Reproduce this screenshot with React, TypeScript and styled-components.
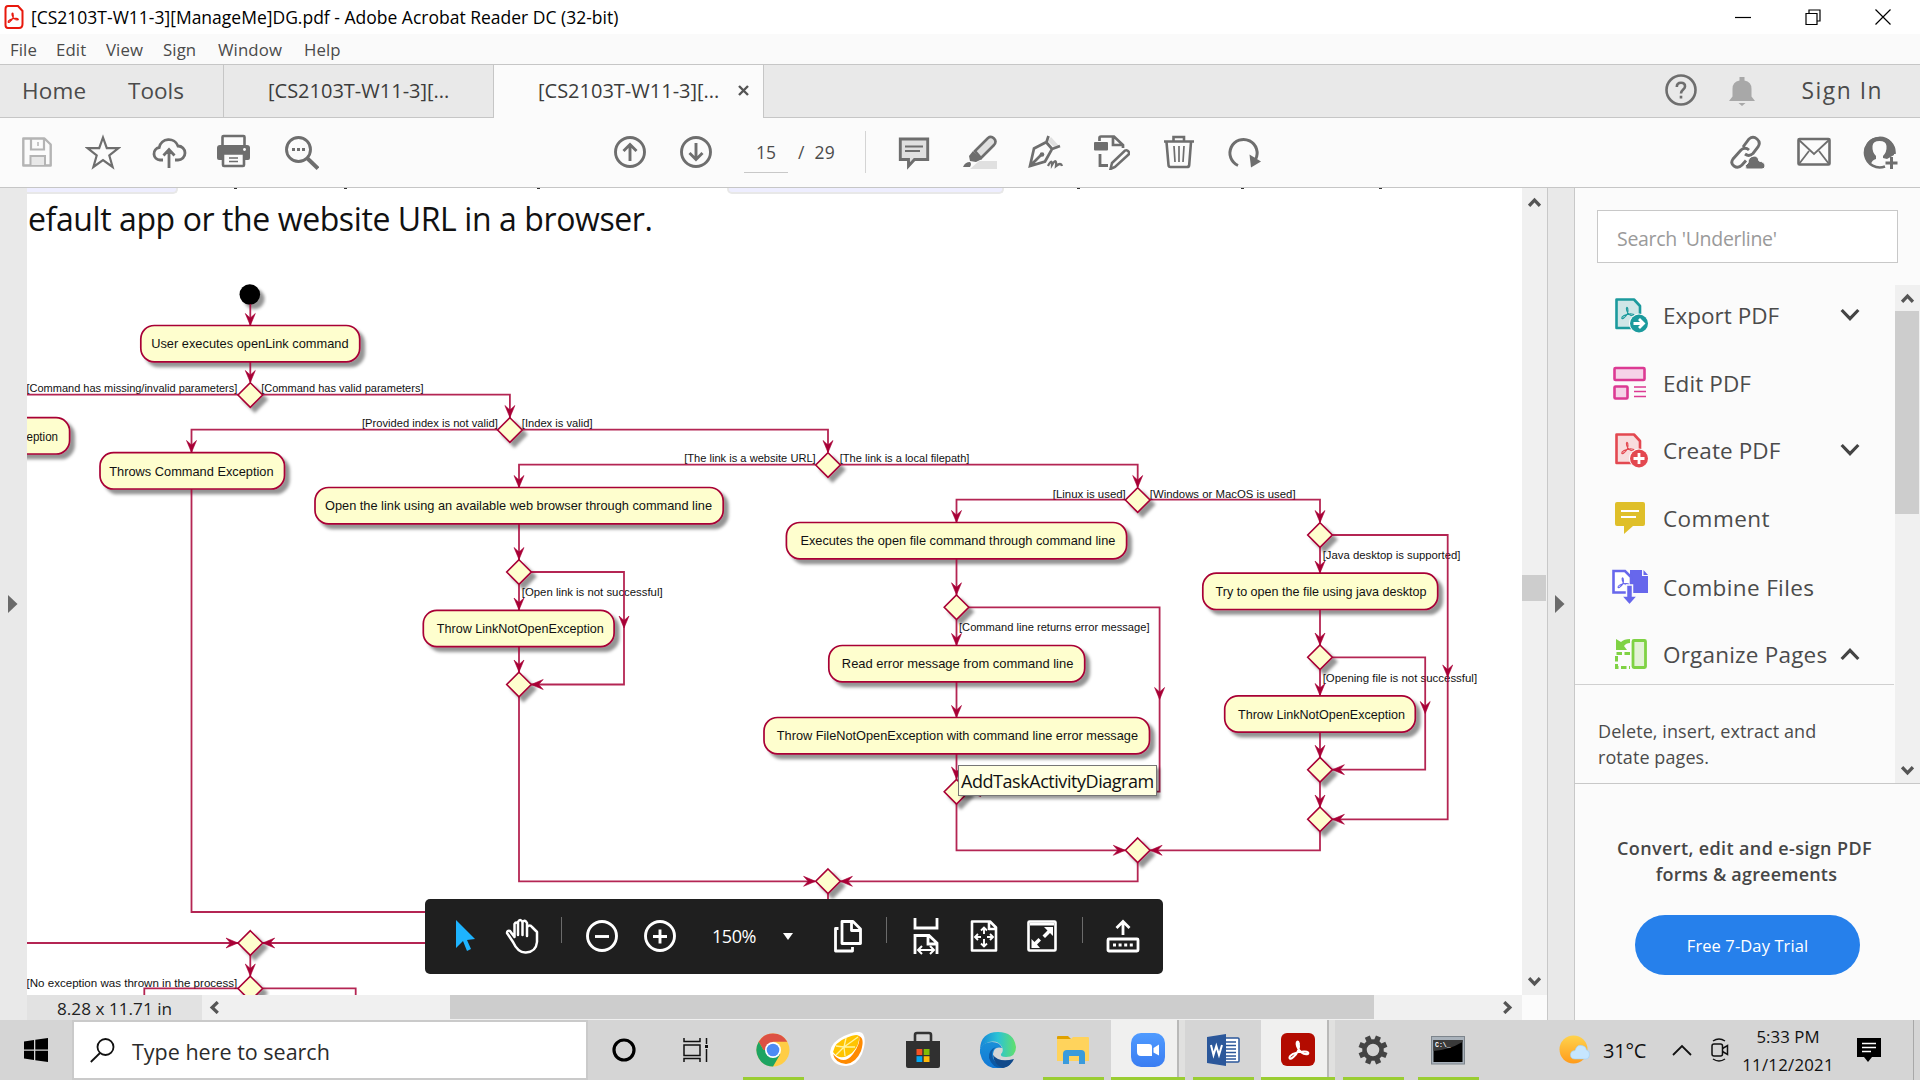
import React from "react";
import styled, { createGlobalStyle } from "styled-components";

const Global = createGlobalStyle`
  html, body { margin: 0; padding: 0; background: #fff; overflow: hidden; }
  * { box-sizing: border-box; }
  svg { display: block; flex: none; }
`;
const UI = `"Segoe UI", "Open Sans", "Noto Sans", sans-serif`;
const G = "#6e6e6e";

const Window = styled.div`
  width: 1920px; height: 1080px; display: flex; flex-direction: column;
  font-family: ${UI}; color: #4b4b4b; overflow: hidden; background: #fbfbfb;
`;
const Txt = styled.span<{ $s: number; $ls?: number; $c?: string; $b?: number }>`
  font-size: ${p => p.$s}px; letter-spacing: ${p => p.$ls || 0}px;
  color: ${p => p.$c || "inherit"}; font-weight: ${p => p.$b || 400}; white-space: nowrap;
`;
const TitleBar = styled.header`
  height: 34px; flex: none; background: #fff; display: flex; align-items: center; padding-left: 4px; color: #000;
`;
const TitleText = styled.div`margin-left: 7px; flex: 1; line-height: 34px;`;
const WinButtons = styled.div`display: flex; margin-right: 2px;`;
const WinButton = styled.div`width: 70px; height: 34px; display: flex; align-items: center; justify-content: center;`;
const MenuBar = styled.nav`
  height: 30px; flex: none; background: #fafafa; display: flex; align-items: center; padding-left: 10px; color: #4a4a4a;
`;
const MenuItem = styled.div<{ $w: number }>`width: ${p => p.$w}px; line-height: 30px; padding-top: 1px;`;
const TabBar = styled.div`
  height: 54px; flex: none; display: flex; background: #e9e9e9; border-top: 1px solid #c6c6c6;
`;
const TabCell = styled.div<{ $w?: number; $pl: number; $on?: boolean; $edge?: boolean }>`
  ${p => (p.$w ? `width: ${p.$w}px; flex: none;` : "flex: 1;")}
  padding-left: ${p => p.$pl}px; display: flex; align-items: center; padding-bottom: ${p => (p.$on ? 2 : 1)}px;
  background: ${p => (p.$on ? "#fbfbfb" : "transparent")};
  border-bottom: ${p => (p.$on ? "0" : "1px solid #c6c6c6")};
  border-left: ${p => (p.$edge ? "1px solid #c6c6c6" : "0")};
`;
const TabClose = styled.div`margin-left: auto; margin-right: 14px;`;
const Account = styled.div`
  margin-left: auto; display: flex; align-items: center; padding-right: 37px;
  & > svg:first-child { margin: 0 29px 1px 0; }
  & > span { margin-left: 45px; }
`;
const Toolbar = styled.div`
  height: 70px; flex: none; display: flex; background: #fbfbfb; border-bottom: 1px solid #c6c6c6; padding: 16px 22px 0 19px;
`;
const IconGroup = styled.div<{ $ml?: string }>`display: flex; gap: 30px; height: 36px; margin-left: ${p => p.$ml || "0"};`;
const PageBox = styled.div`
  width: 44px; height: 39px; margin-left: 30px; border-bottom: 1px solid #c8c8c8; text-align: center; line-height: 37px;
`;
const PageTotal = styled.div`margin-left: 10px; width: 66px; line-height: 37px;`;
const VLine = styled.div<{ $h: number; $c: string; $m: string }>`
  width: 1px; height: ${p => p.$h}px; background: ${p => p.$c}; margin: ${p => p.$m}; flex: none;
`;
const Body = styled.div`height: 832px; flex: none; display: flex;`;
const LeftRail = styled.div`
  width: 27px; background: #e9e9e9; display: flex; align-items: center; padding: 0 0 1px 8px;
`;
const DocColumn = styled.main`width: 1495px; display: flex; flex-direction: column;`;
const Page = styled.div`height: 807px; background: #fff; overflow: hidden; position: relative;`;
const PrevLine = styled.div`height: 6px; display: flex;`;
const CodePill = styled.div<{ $w: number; $ml: number; $open?: boolean }>`
  width: ${p => p.$w}px; height: 6px; margin-left: ${p => p.$ml}px; background: #eeeeff; flex: none;
  border: solid #e8e8e8; border-width: 0 2px 2px ${p => (p.$open ? 0 : 2)}px;
  border-radius: 0 0 5px ${p => (p.$open ? 0 : 5)}px;
`;
const Descender = styled.i<{ $ml: number }>`width: 3px; height: 1px; background: #333; margin-left: ${p => p.$ml}px; flex: none;`;
const Paragraph = styled.p`margin: 0; height: 46px; line-height: 49px; padding-left: 1px; color: #111; white-space: nowrap;`;
const BottomBar = styled.div`height: 25px; display: flex; background: #f0f0f0;`;
const PageSize = styled.div`width: 175px; background: #e2e2e2; color: #222; line-height: 27px; padding-left: 30px;`;
const ScrollEnd = styled.div<{ $w: number; $h: number; $push?: string }>`
  width: ${p => p.$w}px; height: ${p => p.$h}px; display: flex; align-items: center; justify-content: center; flex: none;
  margin: ${p => p.$push || "0"};
`;
const HThumb = styled.div`width: 924px; height: 24px; background: #cdcdcd; margin-left: 223px;`;
const VScroll = styled.div<{ $h: number }>`width: 25px; height: ${p => p.$h}px; background: #f0f0f0; display: flex; flex-direction: column;`;
const VThumb = styled.div<{ $h: number; $mt: number }>`height: ${p => p.$h}px; margin-top: ${p => p.$mt}px; background: #cdcdcd; width: 24px;`;
const Splitter = styled.div`
  width: 28px; background: #e9e9e9; border: solid #c8c8c8; border-width: 0 1px; display: flex; align-items: center; padding: 0 0 1px 7px;
`;
const Side = styled.aside`width: 345px; display: flex; flex-direction: column;`;
const SearchField = styled.div`
  width: 301px; height: 53px; margin: 22px 0 22px 22px; border: 1px solid #c8c8c8; background: #fff; padding-left: 19px; line-height: 55px; flex: none;
`;
const ToolArea = styled.div`height: 499px; display: flex; border-bottom: 1px solid #c8c8c8; flex: none;`;
const ToolList = styled.div`width: 319px; margin-right: 1px;`;
const ToolRow = styled.div<{ $h: number }>`
  height: ${p => p.$h}px; display: flex; padding-left: 37px; padding-top: 12px; align-items: flex-start;
`;
const ToolName = styled.div`width: 177px; margin-left: 15px; line-height: 38px; height: 36px;`;
const ToolArrow = styled.div`padding-top: 8px;`;
const ToolNote = styled.div`border-top: 1px solid #d0d0d0; padding: 34px 0 0 23px; line-height: 25.5px; height: 99px;`;
const Promo = styled.div`flex: 1; text-align: center; padding-top: 52px; line-height: 25px; color: #464646;`;
const PromoLine = styled.div<{ $r: number }>`padding-right: ${p => p.$r}px;`;
const TrialButton = styled.button`
  width: 225px; height: 60px; margin: 27px 0 0 60px; display: block; border: 0; border-radius: 30px; background: #2680eb; color: #fff;
  font-family: ${UI}; padding: 0;
`;
const FloatBar = styled.div`
  position: absolute; left: 398px; top: 711px; width: 738px; height: 75px; border-radius: 5px; background: #1f1f1f;
  display: flex; align-items: center; color: #fff; padding-bottom: 2px;
`;
const FloatItem = styled.div<{ $w: number; $ml?: number }>`width: ${p => p.$w}px; margin-left: ${p => p.$ml || 0}px; display: flex; justify-content: center; flex: none;`;
const Tooltip = styled.div`
  position: absolute; left: 931px; top: 577px; width: 199px; height: 31px; background: #ffffe1; border: 1px solid #767676;
  box-shadow: 3px 3px 3px rgba(0,0,0,.4); color: #111; line-height: 30px; padding-left: 2px;
`;
const Taskbar = styled.footer`height: 60px; flex: none; background: #d5d5d5; display: flex; color: #111;`;
const Start = styled.div`width: 72px; flex: none; display: flex; align-items: center; justify-content: center;`;
const SearchHere = styled.div`
  width: 516px; flex: none; border: 2px solid #cacaca; background: #fff; display: flex; align-items: center; padding-left: 16px;
`;
const SearchHint = styled.div`margin-left: 17px; padding-top: 3px; color: #2b2b2b;`;
const TaskButton = styled.div<{ $w?: number; $run?: boolean; $active?: boolean }>`
  width: ${p => p.$w || 75}px; height: 60px; display: flex; align-items: center; justify-content: center; flex: none;
  background: ${p =>
    p.$active
      ? "linear-gradient(#9acd32,#9acd32) 1px 57px/74px 3px no-repeat, linear-gradient(90deg, transparent 1px, #f0f0ef 1px 67px, #b9b9b8 67px 69px, #e0e0df 69px)"
      : p.$run
      ? "linear-gradient(#9acd32,#9acd32) 8px 57px/61px 3px no-repeat"
      : "none"};
`;
const Tray = styled.div`display: flex; flex: 1; align-items: center;`;
const TrayItem = styled.div<{ $w: number; $ml: number }>`width: ${p => p.$w}px; margin-left: ${p => p.$ml}px; flex: none; white-space: nowrap;`;
const Clock = styled.div`width: 110px; margin-left: 3px; text-align: center; line-height: 28px; padding-top: 1px; display: flex; flex-direction: column;`;

const Svg = ({ w = 36, h = 36, c = G, sw = 2.6, children }: any) => (
  <svg width={w} height={h} viewBox={`0 0 ${w} ${h}`} fill="none" stroke={c} strokeWidth={sw}>{children}</svg>
);
const ACRO = "M0 9C4 6 6 1 5 -3C4.500 -6 2.500 -5 3.500 -1C5 4 9 7 13 6C15 4 8 2.500 0 6C-5 9 -3 12 0 9Z";
const Chevron = ({ dir, s = 13, c = "#555", sw = 3 }: any) => {
  const r: any = { up: 0, right: 90, down: 180, left: 270 };
  return (
    <svg width={s} height={s} viewBox="0 0 12 12" fill="none" stroke={c} strokeWidth={sw}>
      <path d="M1 9L6 3.800L11 9" transform={`rotate(${r[dir]} 6 6)`} />
    </svg>
  );
};
const Triangle = () => <svg width="10" height="18"><path d="M0 0L9.500 9L0 18Z" fill="#6a6a6a" /></svg>;

/* ---- activity diagram ---- */
const RED = "#a80036";
const boxes: [number, number, number, string, number, number][] = [
  [140.8, 325.5, 218.9, "User executes openLink command", 151.2, 197.4],
  [-60, 417.7, 129.6, "eption", 26.5, 31.5],
  [100, 452.7, 184.5, "Throws Command Exception", 109.3, 164.3],
  [315, 487.5, 408.2, "Open the link using an available web browser through command line", 325, 387],
  [423.3, 610.3, 190.8, "Throw LinkNotOpenException", 436.8, 167],
  [786.4, 522.5, 340.2, "Executes the open file command through command line", 800.4, 315],
  [828.8, 645.5, 255.9, "Read error message from command line", 841.8, 231.6],
  [764, 717.5, 385.5, "Throw FileNotOpenException with command line error message", 776.8, 361.2],
  [1202.8, 573.2, 234.9, "Try to open the file using java desktop", 1215.5, 211],
  [1224.7, 695.8, 190.6, "Throw LinkNotOpenException", 1238, 167],
];
const diamonds = [
  [250.3, 395], [509.9, 430], [828, 465], [519, 572], [519, 684.5], [1137.7, 500], [956.5, 607.3], [956.5, 791.7],
  [1320, 535], [1320, 657.3], [1320, 769.7], [1320, 819.3], [1137.7, 850.3], [828, 881.3], [250.3, 943], [250.3, 988.5],
];
const lines = [
  "M250.300 304V325", "M250.300 362V382", "M238 394.700H20", "M262.700 394.700H509.900V418",
  "M497.500 429.700H191.500V452", "M522.300 429.700H828V452", "M191.500 489V912H828V894", "M815.400 464.700H519V487",
  "M840.200 464.700H1137.700V487", "M519 524V560", "M531.200 572H624V684.500H531", "M519 584.500V610",
  "M519 647V672", "M519 697V881.300H815", "M1125 499.700H956.500V522", "M1149.800 499.700H1320V522",
  "M956.500 559V595", "M968.700 607.300H1159.600V791.700H969", "M956.500 620V645", "M956.500 682V717", "M956.500 754V779",
  "M956.500 804V850.300H1125", "M1332.400 535H1447.700V819.300H1332", "M1320 547V573", "M1320 610V645",
  "M1332.400 657.300H1425.200V769.700H1332", "M1320 670V696", "M1320 732V757", "M1320 782V807", "M1320 832V850.300H1150",
  "M1137.700 863V881.300H840", "M20 943H238", "M262.700 943H480", "M250.300 955V976", "M238 988.300H144.300V1000", "M262.700 988.300H355.700V1000",
];
const arrows: [number, number, number][] = [
  [250.3, 325.5, 0], [250.3, 382.5, 0], [509.9, 417.5, 0], [191.5, 452.5, 0], [828, 452.5, 0], [519, 487.5, 0],
  [519, 559.5, 0], [519, 610, 0], [519, 672, 0], [624, 628, 0], [531.2, 684.5, 90], [1137.7, 487.5, 0],
  [956.5, 522.5, 0], [1320, 522.5, 0], [956.5, 594.8, 0], [956.5, 645.5, 0], [956.5, 717.5, 0], [956.5, 779, 0],
  [1159.6, 699.5, 0], [968.9, 791.7, 90], [1447.7, 677, 0], [1425.2, 713.5, 0], [1320, 573, 0], [1320, 645, 0],
  [1320, 695.5, 0], [1320, 757.3, 0], [1320, 807, 0], [1332.4, 769.7, 90], [1332.4, 819.3, 90], [1125.3, 850.3, -90],
  [1150.1, 850.3, 90], [815.6, 881.3, -90], [840.4, 881.3, 90], [238, 943, -90], [262.7, 943, 90], [250.3, 976, 0],
];
const labels: [string, number, number, number][] = [
  ["[Command has missing/invalid parameters]", 26.5, 392.3, 210.8],
  ["[Command has valid parameters]", 261.2, 392.3, 162.3],
  ["[Provided index is not valid]", 362, 427.3, 135.8],
  ["[Index is valid]", 521.8, 427.3, 70.7],
  ["[The link is a website URL]", 684.2, 462.3, 131.5],
  ["[The link is a local filepath]", 839.8, 462.3, 129.6],
  ["[Linux is used]", 1052.8, 497.5, 73],
  ["[Windows or MacOS is used]", 1149.8, 497.5, 145.8],
  ["[Open link is not successful]", 521.8, 596.3, 140.8],
  ["[Command line returns error message]", 959, 631.3, 190.5],
  ["[Java desktop is supported]", 1322.7, 559.3, 137.8],
  ["[Opening file is not successful]", 1322.7, 681.8, 154.4],
  ["[No exception was thrown in the process]", 26.5, 987, 210.8],
];
const ChartText = styled.text<{ $s: number }>`font-family: "Liberation Sans", Arial, sans-serif; font-size: ${p => p.$s}px; fill: #111; white-space: pre;`;
const Diagram = () => (
  <svg width="1495" height="755" viewBox="27 240 1495 755">
    <defs>
      <filter id="shade" x="-20%" y="-50%" width="150%" height="220%">
        <feDropShadow dx="4.500" dy="4.500" stdDeviation="1.700" floodColor="#000" floodOpacity=".42" />
      </filter>
    </defs>
    <circle cx="249.800" cy="294.500" r="10.300" fill="#000" filter="url(#shade)" />
    {boxes.map(([x, y, w], i) => (
      <rect key={i} x={x} y={y} width={w} height="36.300" rx="13.500" fill="#fefece" stroke={RED} strokeWidth="1.700" filter="url(#shade)" />
    ))}
    {diamonds.map(([x, y], i) => (
      <path key={i} d={`M${x} ${y - 12.3}L${x + 12.3} ${y}L${x} ${y + 12.3}L${x - 12.3} ${y}Z`} fill="#fefece" stroke={RED} strokeWidth="1.600" filter="url(#shade)" />
    ))}
    {boxes.map(([, y, , t, tx, tw], i) => (
      <ChartText key={i} $s={13.2} x={tx} y={y + 22.8} textLength={tw} lengthAdjust="spacingAndGlyphs">{t}</ChartText>
    ))}
    {labels.map(([t, x, y, w], i) => (
      <ChartText key={i} $s={11.8} x={x} y={y} textLength={w} lengthAdjust="spacingAndGlyphs">{t}</ChartText>
    ))}
    <g fill="none" stroke={RED} strokeWidth="1.800" opacity=".85">{lines.map((d, i) => <path key={i} d={d} />)}</g>
    {arrows.map(([x, y, r], i) => (
      <path key={i} d="M-5 -12L0 -7.500L5 -12L0 0Z" fill={RED} stroke={RED} strokeWidth=".6" transform={`translate(${x} ${y}) rotate(${r})`} />
    ))}
  </svg>
);

const DocIcon = ({ c, bg, plus }: any) => (
  <Svg c={c} sw={2.6}>
    <path d="M4.500 2.500H22L28 9V31H4.500Z" fill={bg} strokeLinejoin="round" />
    <path d={ACRO} transform="translate(12 14) scale(.75)" strokeWidth="1.500" />
    <circle cx="27" cy="26.500" r="10" fill="#fbfbfb" stroke="none" />
    <circle cx="27" cy="26.500" r="9" fill={c} stroke="none" />
    <path d={plus ? "M27 21V32M21.500 26.500H32.500" : "M21.500 26.500H30M27 22L31.500 26.500L27 31"} stroke="#fff" strokeWidth="2.800" />
  </Svg>
);

const menus: [string, number][] = [["File", 46], ["Edit", 50], ["View", 57], ["Sign", 55], ["Window", 86], ["Help", 50]];

export default function App() {
  return (
    <Window>
      <Global />
      <TitleBar>
        <Svg w={20} h={26} c="#e8180c" sw={2}>
          <path d="M4 2H14L18.500 7V20Q18.500 24 15 24H4Q1.500 24 1.500 21V5Q1.500 2 4 2Z" fill="#fff" />
          <path d={ACRO} transform="translate(6 12) scale(.62)" strokeWidth="2" />
        </Svg>
        <TitleText><Txt $s={17.5}>[CS2103T-W11-3][ManageMe]DG.pdf - Adobe Acrobat Reader DC (32-bit)</Txt></TitleText>
        <WinButtons>
          <WinButton><Svg w={16} h={16} c="#000" sw={1.2}><path d="M0 8.500H16" /></Svg></WinButton>
          <WinButton><Svg w={16} h={16} c="#000" sw={1.2}><path d="M1 4.500H12V15.500H1ZM4 4V1H15V12H12" /></Svg></WinButton>
          <WinButton><Svg w={16} h={16} c="#000" sw={1.2}><path d="M.5 .5L15.500 15.500M15.500 .5L.5 15.500" /></Svg></WinButton>
        </WinButtons>
      </TitleBar>
      <MenuBar>
        {menus.map(([t, w]) => (
          <MenuItem key={t} $w={w}><Txt $s={16.8} $ls={0.1}>{t}</Txt></MenuItem>
        ))}
      </MenuBar>
      <TabBar>
        <TabCell $w={128} $pl={22}><Txt $s={22.5} $ls={0.2}>Home</Txt></TabCell>
        <TabCell $w={95} $pl={0}><Txt $s={22.5}>Tools</Txt></TabCell>
        <TabCell $w={270} $pl={44} $edge><Txt $s={20} $c="#3c3c3c">[CS2103T-W11-3][...</Txt></TabCell>
        <TabCell $w={270} $pl={44} $on $edge>
          <Txt $s={20} $c="#3c3c3c">[CS2103T-W11-3][...</Txt>
          <TabClose><Svg w={11} h={11} sw={2.4} c="#555"><path d="M1 1L10 10M10 1L1 10" /></Svg></TabClose>
        </TabCell>
        <TabCell $pl={0} $edge>
          <Account>
            <Svg w={34} h={34}>
              <circle cx="17" cy="17" r="14.500" />
              <path d="M12.800 14Q12.800 9.800 17 9.800T21 13.500C21 16.500 17 16.500 17 20.500M17 22.800V25.600" />
            </Svg>
            <Svg w={30} h={30}><path d="M2 25H28L24.500 20.500V13Q24.500 5.500 17.500 4.500V1H12.500V4.500Q5.500 5.500 5.500 13V20.500ZM11.500 27H18.500L15 30Z" fill="#a8a8a8" stroke="none" /></Svg>
            <Txt $s={22.8} $ls={1.5}>Sign In</Txt>
          </Account>
        </TabCell>
      </TabBar>
      <Toolbar>
        <IconGroup>
          <Svg c="#b4b4b4">
            <path d="M4.300 4.500H25.500L31.700 10.500V31.500H4.300Z" strokeLinejoin="round" strokeWidth="2.400" />
            <path d="M12 4.500V15.500H25V4.500" strokeWidth="2.200" /><path d="M19 8V12" strokeWidth="1.500" />
            <path d="M11.500 31V22H26V31" fill="#e8e8e8" strokeWidth="2" />
          </Svg>
          <Svg sw={2.2}><path d="M18 3.500L21.800 14.200L33.500 14.200L24.300 21.500L27.600 33L18 26.200L8.400 33L11.700 21.500L2.500 14.200L14.200 14.200Z" /></Svg>
          <Svg sw={2.8}><path d="M12 26H9A6.300 6.300 0 0 1 8.200 13.500A9.800 9.800 0 0 1 27 12A7 7 0 0 1 27 26H24M18 34V17M12.500 21.500L18 15.500L23.500 21.500" /></Svg>
          <Svg>
            <path d="M5.500 11V3Q5.500 2 6.500 2H26.500Q27.500 2 27.500 3V11" />
            <path d="M3 11H30Q33 11 33 14V24Q33 26 31 26H2Q0 26 0 24V14Q0 11 3 11Z" fill={G} stroke="none" />
            <rect x="6" y="19.500" width="21" height="12.500" rx="1" fill="#fbfbfb" />
            <path d="M12 24H21M12 27.500H21" strokeWidth="1.500" /><circle cx="27.500" cy="15.500" r="1.400" fill="#fff" stroke="none" />
          </Svg>
          <Svg><circle cx="15.500" cy="15.500" r="12" strokeWidth="2.900" /><path d="M24 24L35 34.500" strokeWidth="4" /><path d="M9 15.500H12M14 15.500H17M19 15.500H22" strokeWidth="3" /></Svg>
        </IconGroup>
        <IconGroup $ml="293px">
          <Svg sw={2.9}><circle cx="18" cy="18" r="14.500" /><path d="M18 27V11M11.500 17L18 10.500L24.500 17" /></Svg>
          <Svg sw={2.9}><circle cx="18" cy="18" r="14.500" /><path d="M18 9V25M11.500 19L18 25.500L24.500 19" /></Svg>
        </IconGroup>
        <PageBox><Txt $s={17.5}>15</Txt></PageBox>
        <PageTotal><Txt $s={17.5} $ls={0.3}>/&nbsp; 29</Txt></PageTotal>
        <VLine $h={42} $c="#d4d4d4" $m="-3px 0 0 1px" />
        <IconGroup $ml="30px">
          <Svg><path d="M4.300 5H31.700V25.500H18.500L12.500 32V25.500H4.300Z" fill="#e0e0e0" strokeWidth="2.900" /><path d="M9 12.500H27M9 17H24" strokeWidth="1.800" /></Svg>
          <Svg>
            <path d="M17 27H35V35H8Z" fill="#e0e0e0" stroke="none" />
            <path d="M13 17L26 4Q29 1.500 32 4.500T32 11L19 24Z" fill="#e0e0e0" />
            <path d="M11 17L20 25L14 28L8 27L7 22ZM1 33Q3 28 8 28Q10 30 8 33Z" fill={G} stroke="none" />
          </Svg>
          <Svg>
            <path d="M23 3L32 13L28 15L20 7Z" fill="#e0e0e0" stroke="none" />
            <path d="M20.500 2L18.500 8L6 14.500L2 32L17 27.500L24 15L32 12M18 8L25 16M2.500 31.500L14 20" strokeWidth="2.700" />
            <circle cx="14" cy="20.500" r="2.300" fill={G} stroke="none" />
            <path d="M20 32Q24 24 24 31Q29 23 28 32Q33 28 34 32" strokeWidth="2.300" />
          </Svg>
          <Svg>
            <rect x="0" y="8" width="14" height="8.500" rx="1" fill={G} stroke="none" />
            <path d="M5.500 7V4Q5.500 2.500 7 2.500H20L29 11V14M19 3V11H28" strokeWidth="2.700" />
            <path d="M6 20V31.500H14" strokeWidth="2.800" />
            <path d="M16.500 35L18 29L31 16.500Q33 15.500 34.500 17.500T34 21L21 33Z" strokeWidth="2.500" />
          </Svg>
          <Svg><path d="M4 7.500H34M13.500 7V3H24V7M6.500 8L8.500 31Q8.600 33 10.500 33H27Q29 33 29.200 31L31 8" /><path d="M14 12L15 28M19 12V28M24 12L23 28" strokeWidth="1.700" /></Svg>
          <Svg sw={3}><path d="M12 31.500A13.600 13.600 0 1 1 29.500 25.500" /><path d="M23.500 20.500L35 27.500L25 33.500Z" fill={G} stroke="none" /></Svg>
        </IconGroup>
        <IconGroup $ml="auto">
          <Svg>
            <g transform="translate(-2 0)">
              <path d="M15 13L21 5Q25 1.500 29 5T30 13L25 19.500Q21 23 17 20M21 16Q17 12.500 13 16L5 25Q2 29 6 32T14 31L18 26.500" strokeWidth="2.900" />
              <path d="M18 35Q16 31 20 29Q20 23 26 22Q30 22 31 27Q37 28 37 32Q37 35 34 35Z" fill={G} stroke="#fbfbfb" strokeWidth="1" />
            </g>
          </Svg>
          <Svg><rect x="2.500" y="5" width="31" height="25.500" rx="1" strokeWidth="2.600" /><path d="M3 6L18 20L33 6M3 30L13 17M33 30L23 17" strokeWidth="1.800" /></Svg>
          <Svg>
            <path d="M23 32.500A14.800 14.800 0 1 1 32.500 20" strokeWidth="2.500" />
            <path d="M17.500 3Q3 4 3 18Q3 26 9 30Q10 26 14 25L14 22Q10 18 10.500 12Q11 7 17.500 7Q24 7 24.500 12Q25 18 21 22V24L25 25L32 21Q34 4 17.500 3Z" fill={G} stroke="none" />
            <path d="M29.500 23V35M23.500 29H35.500" strokeWidth="3" />
          </Svg>
        </IconGroup>
      </Toolbar>

      <Body>
        <LeftRail><Triangle /></LeftRail>
        <DocColumn>
          <Page>
            <PrevLine>
              <CodePill $w={151} $ml={0} $open />
              <Descender $ml={56} /><Descender $ml={107} /><Descender $ml={190} />
              <CodePill $w={277} $ml={187} />
              <Descender $ml={73} /><Descender $ml={161} /><Descender $ml={135} />
            </PrevLine>
            <Paragraph><Txt $s={32} $ls={-0.41}>efault app or the website URL in a browser.</Txt></Paragraph>
            <Diagram />
            <Tooltip><Txt $s={18} $ls={-0.45}>AddTaskActivityDiagram</Txt></Tooltip>
            <FloatBar>
              <FloatItem $w={80}><Svg w={20} h={34} c="none"><path d="M1 1L20 20L12 21L16 30L12 32L8 22L1 29Z" fill="#1eb4ff" /></Svg></FloatItem>
              <FloatItem $w={34}>
                <Svg w={34} h={36} c="#fff" sw={2.5}>
                  <path d="M8 24L2 15Q2 12 5 13L9.500 19V6Q11 3 13 6V17V4Q15 0 17.500 4V17V4Q20 1 22 5V18V9Q25 6 27 9L32 14V24Q31 34 21 34.500Q13 35 8 24Z" strokeLinejoin="round" />
                </Svg>
              </FloatItem>
              <VLine $h={26} $c="#6b6b6b" $m="0 0 11px 22px" />
              <FloatItem $w={80}><Svg w={34} h={34} c="#fff" sw={2.9}><circle cx="17" cy="17" r="14.500" /><path d="M10 17.500H24" /></Svg></FloatItem>
              <FloatItem $w={36}><Svg w={34} h={34} c="#fff" sw={2.9}><circle cx="17" cy="17" r="14.500" /><path d="M10 17.500H24M17 10.500V24.500" /></Svg></FloatItem>
              <FloatItem $w={110} $ml={1}><Txt $s={18} $ls={-0.4}>150%</Txt></FloatItem>
              <FloatItem $w={12} $ml={-7}><Svg w={12} h={8} c="none"><path d="M1 1H11L6 8Z" fill="#fff" /></Svg></FloatItem>
              <FloatItem $w={76} $ml={16}>
                <Svg w={30} h={34} c="#fff" sw={2.8}><path d="M9 2.500H20L27.500 10V24.500H9ZM18.500 3V11.500H27M5.500 9.500H2.500V32H19.500V28" strokeLinejoin="round" /></Svg>
              </FloatItem>
              <VLine $h={26} $c="#6b6b6b" $m="0 0 11px 0" />
              <FloatItem $w={77}>
                <Svg w={28} h={38} c="#fff" sw={2.8}><path d="M3 1V11H25V1M3 37V18.500H17L25 26V37M16 19V27H24" /><path d="M6 33H22M10 29L6 33L10 37M18 29L22 33L18 37" strokeWidth="2" /></Svg>
              </FloatItem>
              <FloatItem $w={39}>
                <Svg w={28} h={34} c="#fff" sw={2.6}><path d="M2 2.500H20L26 8.500V31.500H2ZM19 3V10H25.500" strokeLinejoin="round" /><path d="M14 9V15M14 20V27M6 18H11M17 18H22M11 11.500L14 8.500L17 11.500M11 24.500L14 27.500L17 24.500M8 15L5 18L8 21M20 15L23 18L20 21" strokeWidth="1.900" /></Svg>
              </FloatItem>
              <FloatItem $w={78}>
                <Svg w={30} h={34} c="#fff" sw={2.6}><rect x="1.500" y="2.500" width="27" height="29" rx="1" /><path d="M3 5H27" strokeWidth="3" /><path d="M17 8H26V17L23 14L18 19L15.500 16.500L20.500 11.500ZM13 29H4.500V20L7.500 23L11.500 19L14 21.500L10 25.500Z" fill="#fff" stroke="none" /></Svg>
              </FloatItem>
              <VLine $h={26} $c="#6b6b6b" $m="0 0 11px 1px" />
              <FloatItem $w={80}>
                <Svg w={34} h={34} c="#fff" sw={2.8}><rect x="2" y="20" width="30" height="12" rx="1" /><path d="M7 26H27" strokeWidth="3" strokeDasharray="3 2.600" /><path d="M17 16V3M10.500 9L17 2.500L23.500 9" /></Svg>
              </FloatItem>
            </FloatBar>
          </Page>
          <BottomBar>
            <PageSize><Txt $s={17.2}>8.28 x 11.71 in</Txt></PageSize>
            <ScrollEnd $w={25} $h={25}><Chevron dir="left" /></ScrollEnd>
            <HThumb />
            <ScrollEnd $w={30} $h={25} $push="0 0 0 auto"><Chevron dir="right" /></ScrollEnd>
          </BottomBar>
        </DocColumn>
        <VScroll $h={807}>
          <ScrollEnd $w={24} $h={28}><Chevron dir="up" /></ScrollEnd>
          <VThumb $h={26} $mt={359} />
          <ScrollEnd $w={24} $h={27} $push="auto 0 0"><Chevron dir="down" /></ScrollEnd>
        </VScroll>
        <Splitter><Triangle /></Splitter>
        <Side>
          <SearchField><Txt $s={19.5} $c="#9a9a9a" $ls={-0.3}>Search 'Underline'</Txt></SearchField>
          <ToolArea>
            <ToolList>
              <ToolRow $h={67.8}><DocIcon c="#1b9a9d" bg="#cfe6e7" /><ToolName><Txt $s={22.5}>Export PDF</Txt></ToolName><ToolArrow><Chevron dir="down" s={20} c="#444" sw={1.9} /></ToolArrow></ToolRow>
              <ToolRow $h={67.4}>
                <Svg c="#dc3a93" sw={2.6}><rect x="2.500" y="3" width="30" height="12" rx="1" fill="#f6d3e8" /><rect x="2.500" y="21.500" width="13" height="12" rx="1" fill="#f6d3e8" /><path d="M22 22H34M22 26.500H34M22 31.500H34" strokeWidth="1.500" /></Svg>
                <ToolName><Txt $s={22.5} $ls={0.1}>Edit PDF</Txt></ToolName>
              </ToolRow>
              <ToolRow $h={67.8}><DocIcon c="#e34850" bg="#f8dcdd" plus /><ToolName><Txt $s={22.5} $ls={0.1}>Create PDF</Txt></ToolName><ToolArrow><Chevron dir="down" s={20} c="#444" sw={1.9} /></ToolArrow></ToolRow>
              <ToolRow $h={68.6}>
                <Svg><path d="M5 2H31Q33 2 33 4V24Q33 26 31 26H21L12 34V26H5Q3 26 3 24V4Q3 2 5 2Z" fill="#dfbf29" stroke="none" /><path d="M9 11H27M9 17H24" stroke="#fff" strokeWidth="2.200" /></Svg>
                <ToolName><Txt $s={22.5} $ls={0.45}>Comment</Txt></ToolName>
              </ToolRow>
              <ToolRow $h={67.4}>
                <Svg c="#6767ec" sw={2.6}>
                  <path d="M18 1H30V7H36V24H18Z" fill="#6767ec" stroke="none" /><path d="M31.500 1V6H36Z" fill="#6767ec" stroke="none" />
                  <path d="M1.500 2H13L19 8V23.500H1.500Z" fill="#fff" /><path d={ACRO} transform="translate(8 12) scale(.65)" strokeWidth="1.700" />
                  <path d="M14.500 16H20.500V27H25.500L17.500 36L9.500 27H14.500Z" fill="#6767ec" stroke="#fbfbfb" strokeWidth="1.500" />
                </Svg>
                <ToolName><Txt $s={22.5} $ls={0.36}>Combine Files</Txt></ToolName>
              </ToolRow>
              <ToolRow $h={60}>
                <Svg c="#7fd244" sw={2.8}><rect x="21" y="4.500" width="12.500" height="27" rx="1" fill="#e3f2d6" /><path d="M18 17.500H4.500V31.500H18" strokeDasharray="5.500 2.500" strokeWidth="3" /><path d="M18 3Q12 3 9 6L4 3V14H15L12 10Q14 7 18 7Z" fill="#7fd244" stroke="none" /></Svg>
                <ToolName><Txt $s={22.5} $ls={0.2}>Organize Pages</Txt></ToolName><ToolArrow><Chevron dir="up" s={20} c="#444" sw={1.9} /></ToolArrow>
              </ToolRow>
              <ToolNote><Txt $s={18} $ls={0.08}>Delete, insert, extract and<br />rotate pages.</Txt></ToolNote>
            </ToolList>
            <VScroll $h={498}>
              <ScrollEnd $w={25} $h={26}><Chevron dir="up" /></ScrollEnd>
              <VThumb $h={203} $mt={0} />
              <ScrollEnd $w={25} $h={26} $push="auto 0 0"><Chevron dir="down" /></ScrollEnd>
            </VScroll>
          </ToolArea>
          <Promo>
            <PromoLine $r={6}><Txt $s={18} $b={600} $ls={0.38}>Convert, edit and e-sign PDF</Txt></PromoLine>
            <PromoLine $r={2}><Txt $s={18} $b={600} $ls={0.2}>forms &amp; agreements</Txt></PromoLine>
            <TrialButton><Txt $s={16.5} $ls={0.1}>Free 7-Day Trial</Txt></TrialButton>
          </Promo>
        </Side>
      </Body>

      <Taskbar>
        <Start><Svg w={24} h={24} c="none"><path d="M0 3.500L10 2V11.500H0ZM11.300 1.800L24 0V11.500H11.300ZM0 12.700H10V22L0 20.500ZM11.300 12.700H24V24L11.300 22.200Z" fill="#000" /></Svg></Start>
        <SearchHere>
          <Svg w={25} h={25} c="#111" sw={1.8}><circle cx="15.500" cy="9" r="8" /><path d="M10 15L.8 24" /></Svg>
          <SearchHint><Txt $s={21.5}>Type here to search</Txt></SearchHint>
        </SearchHere>
        <TaskButton $w={72}><Svg w={26} h={26} c="#000" sw={3.2}><circle cx="13" cy="13" r="10" /></Svg></TaskButton>
        <TaskButton>
          <Svg w={30} h={24} c="#111" sw={1.5}><path d="M1 0V3.500H17V0M1 24V20.500H17V24M1 7H17V17.500H1ZM23.500 0V6M23.500 11V24" /><rect x="22" y="7" width="3" height="3" fill="#111" stroke="none" /></Svg>
        </TaskButton>
        <TaskButton $run>
          <svg width="34" height="34" viewBox="-17 -17 34 34">
            <circle r="16.500" fill="#ffcd46" />
            <path d="M-14.300 -8.300A16.500 16.500 0 0 1 14.300 -8.300L0 -8.300L-7.200 4.200Z" fill="#dd5144" />
            <path d="M-14.300 -8.300A16.500 16.500 0 0 0 0 16.500L7.200 4.200L0 0H-9.500Z" fill="#1da462" />
            <circle r="8" fill="#fff" /><circle r="6.300" fill="#4c8bf5" />
          </svg>
        </TaskButton>
        <TaskButton>
          <svg width="38" height="36" viewBox="0 0 38 36">
            <path d="M1 20Q2 10 15 4Q31 -3 34 2Q38 8 33 22Q27 35 16 34Q2 33 1 20Z" fill="#fff" />
            <path d="M4 22Q15 34 24 22Q32 11 30 4Q36 6 32 19Q27 31 17 32Q6 31 4 22Z" fill="#ff8a00" />
            <path d="M4 20Q6 10 17 6Q28 1 30 4Q31 13 23 21Q11 30 4 20Z" fill="#ffc400" />
            <path d="M15 15L7 14M15 15L17 6M15 15L29 5M15 15L26 15M15 15L16 24M15 15L7 23" stroke="#fff3a0" strokeWidth="1.300" />
          </svg>
        </TaskButton>
        <TaskButton>
          <svg width="36" height="38" viewBox="0 0 36 38">
            <path d="M10 11V4Q10 2 12 2H24Q26 2 26 4V11" fill="none" stroke="#333" strokeWidth="2.600" />
            <path d="M1 10H35V35Q35 37 33 37H3Q1 37 1 35Z" fill="#303030" />
            <path d="M11.500 18H17.300V24H11.500Z" fill="#f35325" /><path d="M18.700 18H24.500V24H18.700Z" fill="#81bc06" />
            <path d="M11.500 25.200H17.300V31H11.500Z" fill="#05a6f0" /><path d="M18.700 25.200H24.500V31H18.700Z" fill="#ffba08" />
          </svg>
        </TaskButton>
        <TaskButton>
          <svg width="36" height="36" viewBox="0 0 36 36">
            <defs>
              <linearGradient id="edgeTop" x1="0" x2="1"><stop offset="0" stopColor="#1685d8" /><stop offset=".5" stopColor="#2cc3d5" /><stop offset="1" stopColor="#62e06a" /></linearGradient>
              <linearGradient id="edgeLow" x1="0" y1="0" x2="0" y2="1"><stop offset="0" stopColor="#1a90d8" /><stop offset="1" stopColor="#1278d6" /></linearGradient>
            </defs>
            <path d="M0 17Q1 0 18 0Q34 0 36 15Q36 25 26 25Q20 25 21 22Q24 19 22 15Q18 8 9 10Q3 12 0 17Z" fill="url(#edgeTop)" />
            <path d="M0 17Q3 10 12 10Q20 10 22 16Q14 14 13 22Q13 31 22 36Q4 39 0 21Z" fill="url(#edgeLow)" />
            <path d="M16 15Q10 19 13 27Q19 36 31 31Q29 35 22 36Q12 36 9 26Q8 18 16 15Z" fill="#0c59a4" />
            <path d="M13 23Q19 31 34 27Q31 34 23 36Q14 33 13 23Z" fill="#114a8b" />
          </svg>
        </TaskButton>
        <TaskButton $run>
          <svg width="34" height="30" viewBox="0 0 34 30">
            <path d="M1 4V2Q1 1 2 1H12L15 4Z" fill="#e0a100" /><path d="M1 4H15L17 2H32Q33 2 33 3V26H1Z" fill="#ffd35c" />
            <path d="M7 29V19Q7 15 11 15H25Q29 15 29 19V29H23V21H13V29Z" fill="#3a9bdc" />
          </svg>
        </TaskButton>
        <TaskButton $active>
          <svg width="34" height="34" viewBox="0 0 34 34">
            <defs><linearGradient id="zm" x1="0" y1="0" x2="0" y2="1"><stop offset="0" stopColor="#4f9bff" /><stop offset="1" stopColor="#3a7df2" /></linearGradient></defs>
            <rect width="34" height="34" rx="10" fill="url(#zm)" />
            <path d="M6 11H18Q21 11 21 14V23H10Q6 23 6 19ZM22.500 15L28 11.500V22.500L22.500 19.500Z" fill="#fff" />
          </svg>
        </TaskButton>
        <TaskButton $run>
          <svg width="34" height="34" viewBox="0 0 34 34">
            <rect x="17" y="5" width="16" height="24" rx="1" fill="#fff" stroke="#2b579a" strokeWidth="1.500" />
            <path d="M20 9H30M20 12.500H30M20 16H30M20 19.500H30M20 23H30M20 26H30" stroke="#2b579a" strokeWidth="1.500" />
            <path d="M1 4L20 1V33L1 30Z" fill="#2b579a" /><path d="M5 12L7.500 22L10.300 13L13 22L16 12" fill="none" stroke="#fff" strokeWidth="2" />
          </svg>
        </TaskButton>
        <TaskButton $active>
          <svg width="34" height="34" viewBox="0 0 34 34">
            <rect y="0" width="34" height="33" rx="6" fill="#b30b00" />
            <path d={ACRO} transform="translate(12 14) scale(1.150)" fill="none" stroke="#fff" strokeWidth="1.800" />
          </svg>
        </TaskButton>
        <TaskButton $run>
          <svg width="30" height="30" viewBox="-15 -15 30 30">
            <circle r="8.500" fill="none" stroke="#444" strokeWidth="4.500" />
            {[0, 45, 90, 135, 180, 225, 270, 315].map(a => <rect key={a} x="-2.700" y="-14.500" width="5.400" height="6" fill="#444" transform={`rotate(${a + 22})`} />)}
          </svg>
        </TaskButton>
        <TaskButton $run>
          <svg width="34" height="30" viewBox="0 0 34 30">
            <rect x=".5" y="1.500" width="33" height="27.500" fill="#a9b2bb" stroke="#7d858c" /><rect x="2.500" y="5" width="29" height="22" fill="#000" />
            <path d="M2.500 16Q18 15 31.500 7V5H2.500Z" fill="#3a3a3a" />
            <text x="4" y="12" fontSize="6.500" fill="#fff" fontFamily="Liberation Mono, monospace" fontWeight="700">C:\_</text>
          </svg>
        </TaskButton>
        <Tray>
          <TrayItem $w={32} $ml={74}>
            <svg width="32" height="30" viewBox="0 0 32 30">
              <defs><linearGradient id="sun" x1="0" y1="0" x2="0" y2="1"><stop offset="0" stopColor="#ffd34d" /><stop offset="1" stopColor="#ff9b1a" /></linearGradient></defs>
              <circle cx="14.500" cy="14.500" r="14" fill="url(#sun)" />
              <path d="M16 24Q11 24 11.500 19Q12 15.500 16 15.500Q18 9 23 10.500Q27 11 27.500 15Q31 16 30.500 20Q30 24 27 24Z" fill="#c6e6ff" stroke="#9fd0f5" strokeWidth=".6" />
            </svg>
          </TrayItem>
          <TrayItem $w={45} $ml={12}><Txt $s={20} $ls={-0.2}>31°C</Txt></TrayItem>
          <TrayItem $w={20} $ml={24}><Svg w={20} h={14} c="#111" sw={1.8}><path d="M1 12L10 3L19 12" /></Svg></TrayItem>
          <TrayItem $w={20} $ml={18}>
            <Svg w={20} h={26} c="#111" sw={1.5}><rect x="2" y="7" width="10.500" height="12" rx="2" /><path d="M12.500 11.500L17.500 8.500V17.500L12.500 14.500M3 4Q9 0 15 4M3 22Q9 26 15 22" /></Svg>
          </TrayItem>
          <Clock><Txt $s={16.8} $ls={0.05}>5:33 PM</Txt><Txt $s={16.8} $ls={0.25}>11/12/2021</Txt></Clock>
          <TrayItem $w={24} $ml={14}><Svg w={24} h={24} c="none"><path d="M0 0H24V19H15L11 24L7 19H0Z" fill="#000" /><path d="M5 5.500H19M5 9.500H19M5 13.500H14" stroke="#fff" strokeWidth="1.500" /></Svg></TrayItem>
          <VLine $h={60} $c="#a8a8a8" $m="0 6px 0 auto" />
        </Tray>
      </Taskbar>
    </Window>
  );
}
